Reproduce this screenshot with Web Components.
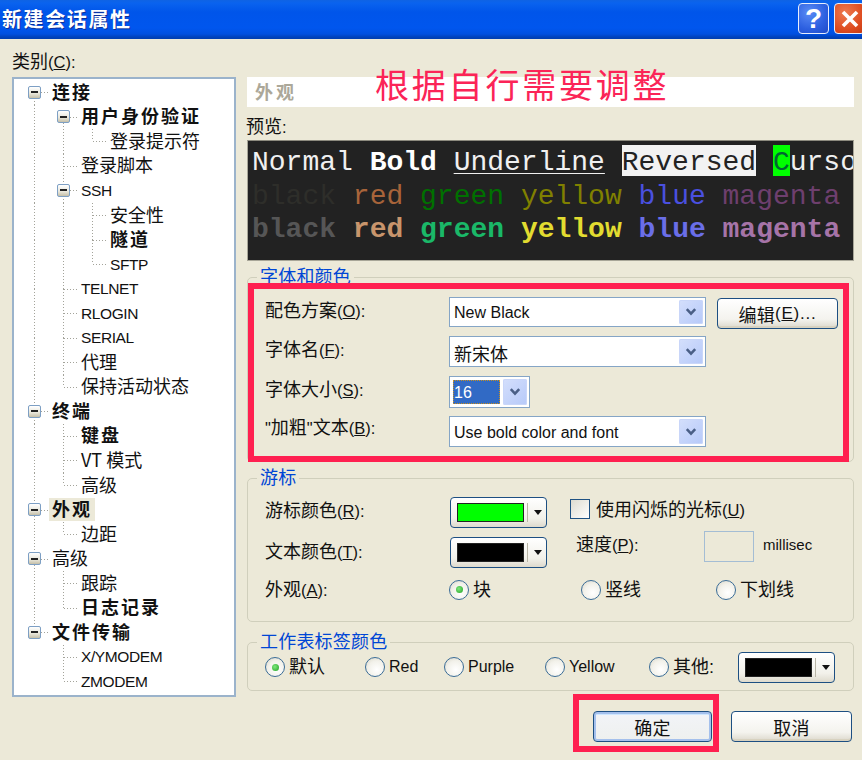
<!DOCTYPE html>
<html lang="zh-CN">
<head>
<meta charset="utf-8">
<title>新建会话属性</title>
<style>
html,body{margin:0;padding:0;background:#ece9d8}
</style>
</head>
<body>
<x-dialog></x-dialog>
<script>
const LAT='"Liberation Sans"';
const CJK='"Noto Sans CJK SC"';
const STACK=LAT+','+CJK+',sans-serif';
function def(name,css,html){
  customElements.define(name,class extends HTMLElement{
    constructor(){super();const r=this.attachShadow({mode:'open'});
      r.innerHTML='<style>'+css+'</style>'+(typeof html==='function'?html(this):html);}
  });
}
const arrowBox=`.arrow{width:24px;flex:none;border-radius:2px;background:linear-gradient(135deg,#d4dffc,#b6c9f9);display:flex;align-items:center;justify-content:center;margin:2px 2px 2px 0;box-shadow:inset 0 0 0 1px #c9d6f9}
.arrow svg{display:block}`;
const chevron='<svg width="12" height="10" viewBox="0 0 12 10"><path d="M1.8 2.2 6 6.6l4.2-4.4" fill="none" stroke="#4a5f86" stroke-width="2.6"/></svg>';

def('x-label',`:host{display:inline-block;font:18px/22px ${CJK},sans-serif;color:#111;white-space:nowrap}
.k{font:16.5px/22px ${LAT},sans-serif}`,
 h=>{const k=h.getAttribute('key');
   return '<slot></slot>'+(k?`<span class="k">(<u>${k}</u>)</span>`:'')+(h.hasAttribute('colon')?'<span class="k">:</span>':'');});

def('x-titlebar',`:host{display:flex;align-items:center;height:39px;box-sizing:border-box;overflow:hidden;
 background:linear-gradient(to bottom,#0f63e4 0,#0a63ee 3px,#0055ea 12px,#0056ee 28px,#0050e0 34px,#0042bc 37px,#003eb0 39px)}
.t{flex:1;font:bold 20px/38px ${CJK},sans-serif;letter-spacing:1.6px;color:#fff;padding-left:2px;text-shadow:1px 1px 0 #0d2f9a;margin-top:-1px}
.b{width:31px;height:31px;box-sizing:border-box;border:1.5px solid #e8eefc;border-radius:4px;flex:none;display:flex;align-items:center;justify-content:center;margin-top:-2px}
.h{background:radial-gradient(circle at 35% 30%,#5a8cf5,#2c5fe0 60%,#1f4bc8);color:#fff;font:bold 28px/28px ${LAT},sans-serif;margin-right:5px}
.c{background:radial-gradient(circle at 35% 30%,#ee7a50,#dd4a1e 65%,#c23a12);margin-right:-3px}`,
`<div class="t"><slot></slot></div><div class="b h">?</div><div class="b c"><svg width="24" height="24" viewBox="0 0 24 24"><path d="M5 5l14 14M19 5 5 19" stroke="#fff" stroke-width="3.6" fill="none"/></svg></div>`);

def('x-tree',`:host{display:grid;grid-auto-rows:24.55px;box-sizing:border-box;height:620px;background:#fff;border:2px solid #9bb3cb;padding:1px 0 0 5px}`,`<slot></slot>`);

def('x-tree-row',`:host{display:flex;align-items:stretch;font:18px/21px ${CJK},sans-serif;color:#111;white-space:nowrap}
:host([bold]) .txt{font-weight:700;letter-spacing:2px}
:host([latin]) .txt{font:15.5px/23px ${LAT},sans-serif;letter-spacing:-.4px}
.cell{position:relative;width:29px;flex:none}
.up,.down,.h{position:absolute}
.up,.down{left:15px;width:1px;background:repeating-linear-gradient(to bottom,#a3a39a 0 1px,transparent 1px 3px)}
.up{top:0;height:50%}
.down{top:50%;bottom:0}
.h{left:16px;right:0;top:50%;height:1px;background:repeating-linear-gradient(to right,#a3a39a 0 1px,transparent 1px 3px)}
.x{position:absolute;left:9px;top:50%;margin-top:-6.5px;width:13px;height:13px;box-sizing:border-box;border:1px solid #7d9fc4;border-radius:2px;background:linear-gradient(#fff,#e8e6da 60%,#c5bfa8);display:flex;align-items:center;justify-content:center}
.x::before{content:"";width:7px;height:2px;background:#222}
.txt{align-self:center;margin-left:1px;padding:0 3px;height:23px}
:host([selected]) .txt{background:#ece9d8}`,
h=>{
  const toks=(h.getAttribute('g')||'').split(',');
  const m={v:'<i class="up"></i><i class="down"></i>',b:'<i class="up"></i><i class="down"></i><i class="h"></i>',l:'<i class="up"></i><i class="h"></i>',n:'',
    eD:'<i class="down"></i><i class="h"></i><b class="x"></b>',eU:'<i class="up"></i><i class="h"></i><b class="x"></b>',eB:'<i class="up"></i><i class="down"></i><i class="h"></i><b class="x"></b>'};
  return toks.map(t=>`<span class="cell">${m[t]}</span>`).join('')+'<span class="txt"><slot></slot></span>';
});

def('x-header',`:host{display:block;position:relative;height:30px;background:#fff;font:bold 18px/28px ${CJK},sans-serif;color:#aca899;padding-left:8px;letter-spacing:3px}`,`<slot></slot>`);

def('x-preview',`:host{display:block;box-sizing:border-box;height:121px;background:#222;border:1px solid #a8a698;border-top-color:#8c8a7e;padding:5px 0 0 4px;overflow:hidden;font:28px/33.5px "Liberation Mono",monospace;white-space:pre;color:#f0f0f0}
div{height:33.5px}
b{font-weight:700;color:#fff}
.rev{background:#f2f2f2;color:#222;box-shadow:0 -2px 0 #f2f2f2,inset 0 -2px 0 #222}
.cur{background:#00ff00;color:#063;box-shadow:0 -2px 0 #00ff00,inset 0 -2px 0 #222}
.u{text-decoration:underline;text-underline-offset:3px;text-decoration-thickness:1px}
.s1{color:#2e2e2a}.s2{color:#a8643a}.s3{color:#007000}.s4{color:#808000}.s5{color:#4a50e0}.s6{color:#6e3f6e}
.b1{color:#565656}.b2{color:#c8956c}.b3{color:#1ab868}.b4{color:#e2dc30}.b5{color:#6a6ee8}.b6{color:#a674a8}`,
`<div>Normal <b>Bold</b> <span class="u">Underline</span> <span class="rev">Reversed</span> <span class="cur">C</span>ursor</div><div><span class="s1">black</span> <span class="s2">red</span> <span class="s3">green</span> <span class="s4">yellow</span> <span class="s5">blue</span> <span class="s6">magenta</span></div><div><b class="b1">black</b> <b class="b2">red</b> <b class="b3">green</b> <b class="b4">yellow</b> <b class="b5">blue</b> <b class="b6">magenta</b></div>`);

def('x-group',`:host{display:block;box-sizing:border-box;border:1px solid #d0cfbc;border-radius:5px}
.lg{display:table;margin:-12px 0 0 9px;padding:0 3px;height:22px;background:#ece9d8;font:18px/19px ${CJK},sans-serif;color:#0046d5;letter-spacing:.2px}`,
h=>`<div class="lg">${h.getAttribute('legend')}</div><slot></slot>`);

def('x-combo',`:host{display:flex;box-sizing:border-box;border:1px solid #85a5c6;background:#fff;font:16px/1 ${STACK};color:#111}
.v{flex:1;display:flex;align-items:center;padding:2px 0 0 4px;min-width:0;white-space:nowrap}
:host([cjk]) .v{font:18px/1 ${CJK},sans-serif}
:host([sel]) .v{margin:3px;padding:2px 0 0 1px;background:#316ac5;color:#fff;outline:1px dotted #c89020;outline-offset:-1px}
${arrowBox}`,
`<div class="v"><slot></slot></div><div class="arrow">${chevron}</div>`);

def('x-btn',`:host{display:flex;align-items:center;justify-content:center;box-sizing:border-box;border:1.5px solid #1d4f82;border-radius:4px;background:linear-gradient(#fff,#f4f3ee 70%,#dcd8cc);font:18px/1 ${CJK},sans-serif;color:#111;box-shadow:inset 0 -2px 0 #d8d2c0;letter-spacing:.3px}
:host([default]){box-shadow:inset 0 0 0 2px #a4c0ec,inset 0 3px 0 #cee7ff;background:linear-gradient(#f2f4f8,#eef0ee)}`,`<slot></slot>`);

def('x-color',`:host{display:flex;box-sizing:border-box;border:1.5px solid #1d4f82;border-radius:4px;background:linear-gradient(#fff,#f2f1ea 70%,#dedacd);padding:5px 2px 5px 6px;align-items:stretch}
.sw{flex:1;border:1px solid #222}
.sp{width:1px;margin:0 3px;background:#b8b5a6}
.ar{width:13px;display:flex;align-items:center;justify-content:center}
.ar i{border:4px solid transparent;border-top:5px solid #111;border-bottom:0}`,
h=>`<div class="sw" style="background:${h.getAttribute('color')}"></div><div class="sp"></div><div class="ar"><i></i></div>`);

def('x-radio',`:host{display:inline-flex;align-items:center;gap:4px;font:18px/20px ${STACK};color:#111;white-space:nowrap}
:host([latin]){font:16px/20px ${LAT},sans-serif}
.r{width:20px;height:20px;box-sizing:border-box;border-radius:50%;border:1.5px solid #3a6c97;background:radial-gradient(circle at 60% 65%,#fff,#f2f1ea 55%,#d6d3c4);flex:none;display:flex;align-items:center;justify-content:center}
:host([checked]) .r::before{content:"";width:7px;height:7px;border-radius:50%;background:radial-gradient(circle at 40% 40%,#7ee87e,#21a121)}`,
`<span class="r"></span><span class="t"><slot></slot></span>`);

def('x-check',`:host{display:inline-flex;align-items:center;gap:6px;white-space:nowrap}
.c{width:20px;height:20px;box-sizing:border-box;border:1.5px solid #1f5283;background:linear-gradient(135deg,#dedcd0,#fff);flex:none}`,
`<span class="c"></span><slot></slot>`);

def('x-mark',`:host{display:block;position:absolute;box-sizing:border-box;border:6px solid #ff2050;pointer-events:none}`,``);
def('x-note',`:host{display:block;position:absolute;font:34px/40px ${CJK},sans-serif;letter-spacing:2.8px;color:#fb2457;white-space:nowrap}`,`<slot></slot>`);

def('x-dialog',`:host{display:block;position:relative;width:862px;height:760px;overflow:hidden;background:#ece9d8}
main{display:grid;grid-template-columns:224px 607px;column-gap:11px;padding:13px 0 0 12px}
.cap{height:25px;display:block;margin-top:-3px;margin-bottom:3px}
.right{padding-top:25px;display:flex;flex-direction:column}
.pl{height:33px;display:flex;align-items:flex-end;padding-bottom:2px;box-sizing:border-box;margin-left:-1px}
x-group.g1{height:185px;margin-top:16px}
x-group.g2{height:144px;margin-top:16px}
x-group.g3{height:49px;margin-top:20px}
.f1{display:grid;grid-template-columns:173px 257px 121px;column-gap:11px;grid-template-rows:30px 31px 31px 31px;row-gap:9px;margin:9px 0 0 17px;align-items:start}
.f1 x-label{margin-top:1px}
.f1 x-label.lb{margin-top:-1px}
.f1 x-combo{height:100%}
.f1 .sz{width:81px;height:32px}
.f1 x-btn{height:31px;margin-top:1px}
.f2{display:grid;grid-template-columns:185px 97px 1fr;grid-template-rows:31px 31px 20px;row-gap:9px;margin:8px 0 0 17px;align-items:center}
.f2 x-color{height:31px}
.f2 > x-label{margin-top:-5px}
.f2 > x-label.t2{margin-top:-3px}
.f2 .row3{grid-column:2/4;display:grid;grid-template-columns:132px 135px auto;margin:5px 0 0 -1px}
.f2 > x-label.l3{margin-top:3px}
.ck{margin-left:23px;margin-top:-8px}
.spd{display:flex;align-items:center;margin:-12px 0 0 29px}
.spd x-label{width:128px;margin-top:-6px}
.in{width:50px;height:31px;box-sizing:border-box;border:1.5px solid #a4bdd4}
.ms{font:15px ${LAT},sans-serif;margin:-4px 0 0 9px;color:#111}
.f3{display:flex;align-items:center;margin:-1px 0 0 17px}
.f3 x-radio{flex:none;margin-top:-1px}
.f3 x-color{width:97px;height:31px}
.foot{display:grid;grid-template-columns:119px 121px;column-gap:19px;justify-content:end;padding-right:2px;margin-top:20px}
.foot x-btn{height:31px}`,
`<x-titlebar>新建会话属性</x-titlebar>
<main>
 <div>
  <x-label class="cap" key="C" colon>类别</x-label>
  <x-tree>
   <x-tree-row g="eD" bold>连接</x-tree-row>
   <x-tree-row g="v,eD" bold>用户身份验证</x-tree-row>
   <x-tree-row g="v,v,l">登录提示符</x-tree-row>
   <x-tree-row g="v,b">登录脚本</x-tree-row>
   <x-tree-row g="v,eB" latin>SSH</x-tree-row>
   <x-tree-row g="v,v,b">安全性</x-tree-row>
   <x-tree-row g="v,v,b" bold>隧道</x-tree-row>
   <x-tree-row g="v,v,l" latin>SFTP</x-tree-row>
   <x-tree-row g="v,b" latin>TELNET</x-tree-row>
   <x-tree-row g="v,b" latin>RLOGIN</x-tree-row>
   <x-tree-row g="v,b" latin>SERIAL</x-tree-row>
   <x-tree-row g="v,b">代理</x-tree-row>
   <x-tree-row g="v,l">保持活动状态</x-tree-row>
   <x-tree-row g="eB" bold>终端</x-tree-row>
   <x-tree-row g="v,b" bold>键盘</x-tree-row>
   <x-tree-row g="v,b">VT 模式</x-tree-row>
   <x-tree-row g="v,l">高级</x-tree-row>
   <x-tree-row g="eB" bold selected>外观</x-tree-row>
   <x-tree-row g="v,l">边距</x-tree-row>
   <x-tree-row g="eB">高级</x-tree-row>
   <x-tree-row g="v,b">跟踪</x-tree-row>
   <x-tree-row g="v,l" bold>日志记录</x-tree-row>
   <x-tree-row g="eU" bold>文件传输</x-tree-row>
   <x-tree-row g="n,b" latin>X/YMODEM</x-tree-row>
   <x-tree-row g="n,l" latin>ZMODEM</x-tree-row>
  </x-tree>
 </div>
 <div class="right">
  <x-header>外观</x-header>
  <div class="pl"><x-label colon>预览</x-label></div>
  <x-preview></x-preview>
  <x-group class="g1" legend="字体和颜色">
   <div class="f1">
    <x-label key="O" colon>配色方案</x-label><x-combo>New Black</x-combo><x-btn>编辑<span style="font:17px 'Liberation Sans',sans-serif;letter-spacing:.8px">(<u>E</u>)...</span></x-btn>
    <x-label key="F" colon>字体名</x-label><x-combo cjk>新宋体</x-combo><span></span>
    <x-label key="S" colon>字体大小</x-label><x-combo class="sz" sel>16</x-combo><span></span>
    <x-label class="lb" key="B" colon><span style="font:16.5px 'Liberation Sans',sans-serif">"</span>加粗<span style="font:16.5px 'Liberation Sans',sans-serif">"</span>文本</x-label><x-combo>Use bold color and font</x-combo><span></span>
   </div>
  </x-group>
  <x-group class="g2" legend="游标">
   <div class="f2">
    <x-label key="R" colon>游标颜色</x-label><x-color color="#00ff00"></x-color><x-check class="ck"><x-label key="U">使用闪烁的光标</x-label></x-check>
    <x-label class="t2" key="T" colon>文本颜色</x-label><x-color color="#000"></x-color><div class="spd"><x-label key="P" colon>速度</x-label><span class="in"></span><span class="ms">millisec</span></div>
    <x-label class="l3" key="A" colon>外观</x-label>
    <div class="row3"><x-radio checked>块</x-radio><x-radio>竖线</x-radio><x-radio>下划线</x-radio></div>
   </div>
  </x-group>
  <x-group class="g3" legend="工作表标签颜色">
   <div class="f3">
    <x-radio checked style="width:100px">默认</x-radio>
    <x-radio latin style="width:79px">Red</x-radio>
    <x-radio latin style="width:101px">Purple</x-radio>
    <x-radio latin style="width:104px">Yellow</x-radio>
    <x-radio style="width:89px">其他:</x-radio>
    <x-color color="#000"></x-color>
   </div>
  </x-group>
  <div class="foot"><x-btn default>确定</x-btn><x-btn>取消</x-btn></div>
 </div>
</main>
<x-note style="left:375px;top:64px">根据自行需要调整</x-note>
<x-mark style="left:248px;top:283px;width:601px;height:179px"></x-mark>
<x-mark style="left:573px;top:694px;width:146px;height:58px"></x-mark>`);
</script>
</body>
</html>
